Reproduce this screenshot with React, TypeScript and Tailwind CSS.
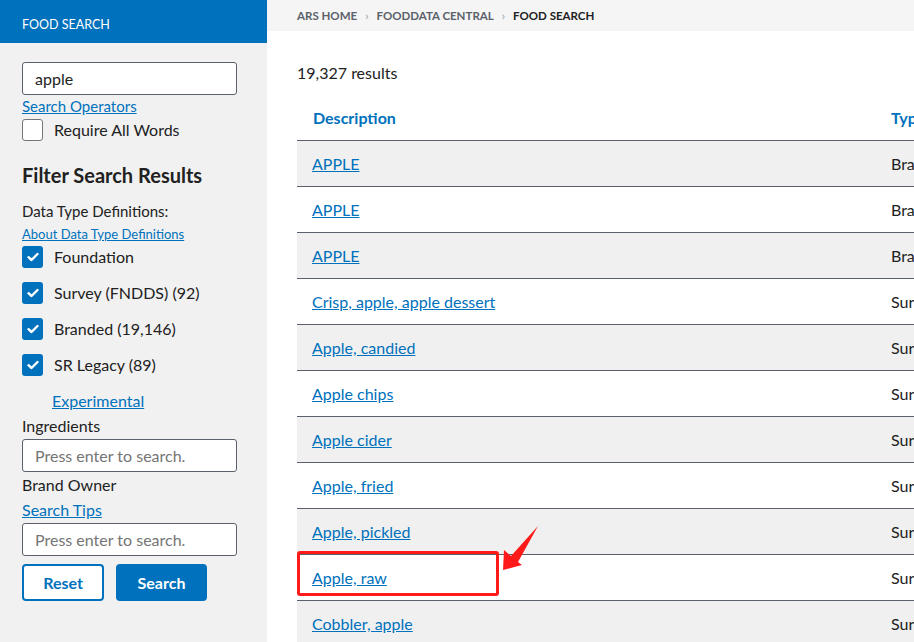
import React from 'react';

const rows: { name: string; type: string }[] = [
  { name: 'APPLE', type: 'Branded' },
  { name: 'APPLE', type: 'Branded' },
  { name: 'APPLE', type: 'Branded' },
  { name: 'Crisp, apple, apple dessert', type: 'Survey (FNDDS)' },
  { name: 'Apple, candied', type: 'Survey (FNDDS)' },
  { name: 'Apple chips', type: 'Survey (FNDDS)' },
  { name: 'Apple cider', type: 'Survey (FNDDS)' },
  { name: 'Apple, fried', type: 'Survey (FNDDS)' },
  { name: 'Apple, pickled', type: 'Survey (FNDDS)' },
  { name: 'Apple, raw', type: 'Survey (FNDDS)' },
  { name: 'Cobbler, apple', type: 'Survey (FNDDS)' },
];

const filters = ['Foundation', 'Survey (FNDDS) (92)', 'Branded (19,146)', 'SR Legacy (89)'];

function CheckedBox() {
  return (
    <span className="flex h-[22px] w-[21px] items-center justify-center rounded-[3px] bg-[#0071bc]">
      <svg width="12" height="10" viewBox="0 0 12 10" fill="none">
        <path d="M1.5 5.2 4.5 8 10.5 2" stroke="white" strokeWidth="2.4" strokeLinecap="round" strokeLinejoin="round" />
      </svg>
    </span>
  );
}

function TextInput({ value, placeholder }: { value?: string; placeholder?: string }) {
  return (
    <div className="flex h-[33px] w-[215px] items-center rounded-[3px] border border-[#5b616b] bg-white px-3 text-[16px]">
      {value ? <span className="text-[#212121]">{value}</span> : <span className="text-[#757575]">{placeholder}</span>}
    </div>
  );
}

export default function App() {
  return (
    <div
      className="flex h-[642px] w-[914px] overflow-hidden bg-white text-[#212121]"
      style={{ fontFamily: 'Lato, "Noto Sans", sans-serif' }}
    >
      {/* sidebar */}
      <aside className="w-[267px] shrink-0 bg-[#f1f1f1]">
        <div className="flex h-[43px] items-center bg-[#0071bc] pl-[22px] pt-[7px] text-[12.5px] text-white">FOOD SEARCH</div>
        <div className="px-[22px] pt-[19px]">
          <TextInput value="apple" />
          <a className="mt-[1px] block text-[15px] leading-[20px] text-[#0071bc] underline">Search Operators</a>
          <label className="mt-[2px] flex items-center gap-[11px]">
            <span className="h-[22px] w-[21px] rounded-[3px] border border-[#757575] bg-white" />
            <span className="text-[16px]">Require All Words</span>
          </label>
          <h2 className="mt-[20px] text-[20px] font-bold leading-[26px]">Filter Search Results</h2>
          <div className="mt-[13px] text-[15px] leading-[20px]">Data Type Definitions:</div>
          <a className="mt-[5px] block text-[13px] leading-[16px] text-[#0071bc] underline">About Data Type Definitions</a>
          <div className="mt-[4px] flex flex-col gap-[14px]">
            {filters.map((f) => (
              <label key={f} className="flex h-[22px] items-center gap-[11px]">
                <CheckedBox />
                <span className="text-[16px]">{f}</span>
              </label>
            ))}
          </div>
          <a className="ml-[30px] mt-[15px] block text-[16px] leading-[20px] text-[#0071bc] underline">Experimental</a>
          <div className="mt-[5px] text-[16px] leading-[20px]">Ingredients</div>
          <div className="mt-[3px]">
            <TextInput placeholder="Press enter to search." />
          </div>
          <div className="mt-[2px] text-[16px] leading-[22px]">Brand Owner</div>
          <a className="mt-[4px] block text-[16px] leading-[20px] text-[#0071bc] underline">Search Tips</a>
          <div className="mt-[3px]">
            <TextInput placeholder="Press enter to search." />
          </div>
          <div className="mt-[8px] flex gap-[12px]">
            <button className="h-[37px] w-[82px] rounded-[4px] border-2 border-[#0071bc] bg-white text-[16px] font-bold text-[#0071bc]">
              Reset
            </button>
            <button className="h-[37px] w-[91px] rounded-[4px] bg-[#0071bc] text-[16px] font-bold text-white">Search</button>
          </div>
        </div>
      </aside>

      {/* main */}
      <main className="relative min-w-0 flex-1">
        <nav className="flex h-[31px] items-center gap-[8px] bg-[#f5f5f5] pl-[30px] text-[11.5px] font-bold text-[#5b616b]">
          <span>ARS HOME</span>
          <span className="text-[#aeb0b5]">›</span>
          <span>FOODDATA CENTRAL</span>
          <span className="text-[#aeb0b5]">›</span>
          <span className="text-[#212121]">FOOD SEARCH</span>
        </nav>
        <div className="pl-[30px] pt-[31px]">
          <div className="text-[16px] leading-[22px]">19,327 results</div>
          <div className="mt-[11px] w-[800px]">
            <div className="flex h-[46px] items-center border-b border-[#5b616b] text-[16px] font-bold text-[#0071bc]">
              <div className="w-[594px] pl-[16px]">Description</div>
              <div>Type</div>
            </div>
            {rows.map((r, i) => (
              <div
                key={i}
                className={`flex h-[46px] items-center border-b border-[#5b616b] text-[16px] ${i % 2 === 0 ? 'bg-[#f0f0f0]' : 'bg-white'}`}
              >
                <div className="w-[594px] pl-[15px]">
                  <a className="text-[#0071bc] underline">{r.name}</a>
                </div>
                <div className="whitespace-nowrap">{r.type}</div>
              </div>
            ))}
          </div>
        </div>

        {/* annotation: red box and arrow */}
        <div className="absolute left-[30px] top-[551px] h-[45px] w-[202px] rounded-[3px] border-[3px] border-[#ff1a1a]" />
        <svg className="absolute left-[230px] top-[520px]" width="50" height="60" viewBox="0 0 50 60">
          <polygon points="6,50 7,30 14,36 41,6 21,42 25,45" fill="#ff1a1a" />
        </svg>
      </main>
    </div>
  );
}
